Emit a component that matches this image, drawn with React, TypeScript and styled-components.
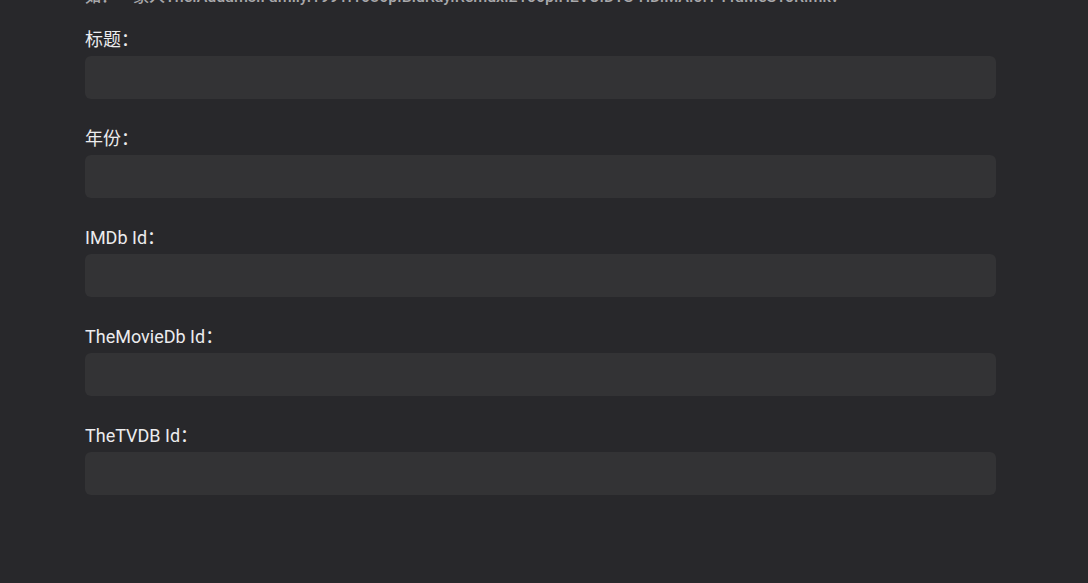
import React from "react";
import styled, { createGlobalStyle } from "styled-components";

const fields = ["标题", "年份", "IMDb Id", "TheMovieDb Id", "TheTVDB Id"];

export default function App() {
  return (
    <>
      <GlobalStyle />
      <Page>
        <Hint>
          如：一家人The.Addams.Family.1991.1080p.BluRay.Remux.2160p.HEVC.DTS-HD.MA.5.1-FraMeSToR.mkv
        </Hint>
        <Form>
          {fields.map((f) => (
            <Field key={f}>
              <Label>{f}：</Label>
              <Input type="text" />
            </Field>
          ))}
        </Form>
      </Page>
    </>
  );
}

const GlobalStyle = createGlobalStyle`
  html, body {
    margin: 0;
    padding: 0;
    background: #28282b;
    height: 100%;
    overflow: hidden;
  }
`;

const Page = styled.div`
  padding: 0 0 0 85px;
  margin-top: -14px;
  font-family: Roboto, "Noto Sans CJK SC", sans-serif;
`;

const Hint = styled.div`
  width: 911px;
  font-size: 16px;
  font-weight: 500;
  line-height: 22px;
  color: #a8a8ab;
  white-space: nowrap;
  overflow: hidden;
`;

const Form = styled.div`
  display: flex;
  flex-direction: column;
  gap: 28px;
  margin-top: 20px;
  width: 911px;
`;

const Field = styled.div`
  display: flex;
  flex-direction: column;
  gap: 4px;
`;

const Label = styled.label`
  font-size: 18px;
  line-height: 24px;
  color: #ececee;
`;

const Input = styled.input`
  box-sizing: border-box;
  height: 43px;
  width: 100%;
  border: none;
  outline: none;
  border-radius: 6px;
  background: #333335;
  color: #ececee;
  padding: 0 12px;
  font-size: 16px;
  font-family: inherit;
`;
